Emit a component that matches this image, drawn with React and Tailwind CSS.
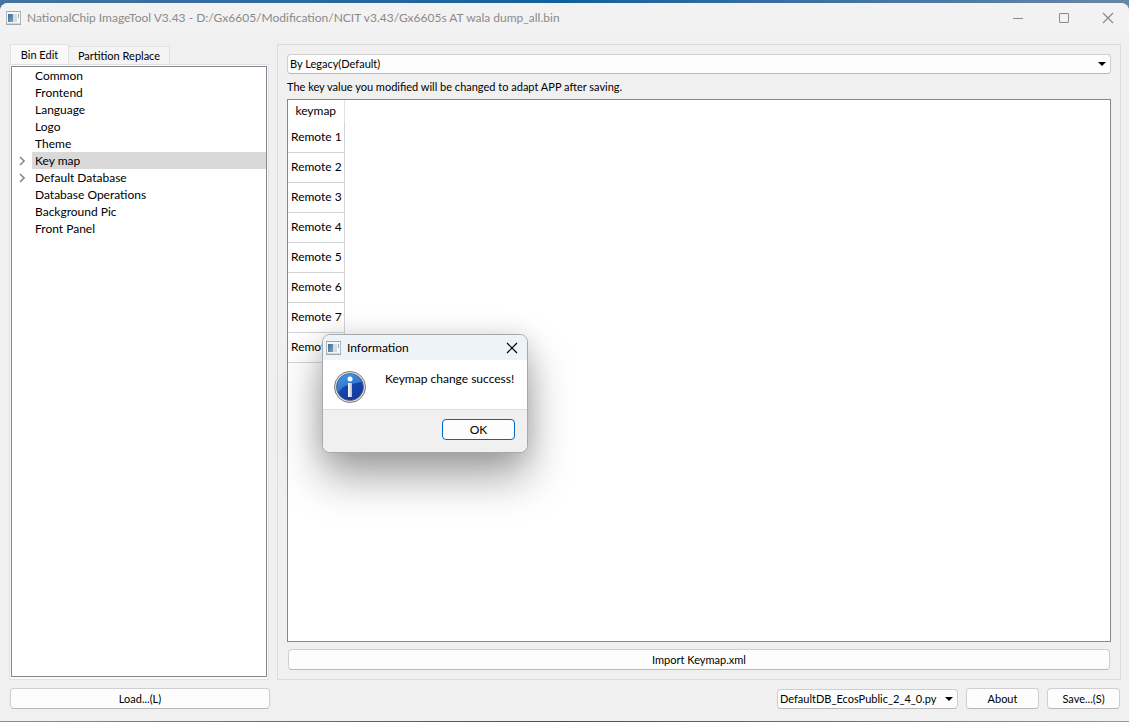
import React, { useState } from 'react';

const treeItems = [
  { name: 'Common' },
  { name: 'Frontend' },
  { name: 'Language' },
  { name: 'Logo' },
  { name: 'Theme' },
  { name: 'Key map', expandable: true },
  { name: 'Default Database', expandable: true },
  { name: 'Database Operations' },
  { name: 'Background Pic' },
  { name: 'Front Panel' },
];

const remotes = ['Remote 1', 'Remote 2', 'Remote 3', 'Remote 4', 'Remote 5', 'Remote 6', 'Remote 7', 'Remote 8'];

const AppIcon = () => (
  <svg width="15" height="14" viewBox="0 0 15 14" className="shrink-0" aria-hidden="true">
    <defs>
      <linearGradient id="appPane" x1="0" y1="0" x2="1" y2="1">
        <stop offset="0" stopColor="#3c6d94" />
        <stop offset="1" stopColor="#7f9fb8" />
      </linearGradient>
    </defs>
    <rect x="0.5" y="0.5" width="14" height="13" fill="#f4f6f7" stroke="#b3b7ba" />
    <path d="M0 0.5h15M0 13.5h15" stroke="#a3a8ab" />
    <rect x="2" y="3" width="5" height="8" fill="url(#appPane)" />
    <rect x="7" y="3" width="4" height="8" fill="#d3dde3" />
    <path d="M12 3h1v4h-1z" fill="#8faabf" />
    <path d="M1 12.5h13" stroke="#d3d6d8" />
  </svg>
);

const InfoIcon = () => (
  <svg width="32" height="32" viewBox="0 0 32 32" className="shrink-0" aria-hidden="true">
    <defs>
      <linearGradient id="infoBall" x1="0" y1="0" x2="0.6" y2="1">
        <stop offset="0" stopColor="#1c55b8" />
        <stop offset="1" stopColor="#1238a0" />
      </linearGradient>
      <linearGradient id="infoShine" x1="0" y1="0" x2="0.6" y2="1">
        <stop offset="0" stopColor="#4a98e6" />
        <stop offset="1" stopColor="#2a6cc6" />
      </linearGradient>
      <linearGradient id="infoStem" x1="0" y1="0" x2="1" y2="0">
        <stop offset="0" stopColor="#ffffff" />
        <stop offset="1" stopColor="#b9bec8" />
      </linearGradient>
    </defs>
    <circle cx="16" cy="16" r="15.5" fill="#e4e4e4" stroke="#777b80" />
    <circle cx="16" cy="16" r="13.5" fill="url(#infoBall)" stroke="#54647c" strokeWidth="0.8" />
    <path d="M3 17A13 13 0 0 1 28 11Q23 12 17 13Q8 15 5 21Q3 20 3 17z" fill="url(#infoShine)" />
    <circle cx="16" cy="8" r="2.5" fill="#fff" />
    <rect x="14" y="12" width="4" height="14" fill="url(#infoStem)" />
  </svg>
);

const CloseIcon = ({ className }) => (
  <svg width="12" height="12" viewBox="0 0 12 12" fill="none" stroke="currentColor" strokeWidth="1.2" className={className} aria-hidden="true">
    <path d="M1 1l10 10M11 1L1 11" />
  </svg>
);

const Combo = ({ label, options, className }) => (
  <div className={`relative ${className}`}>
    <select
      aria-label={label}
      className="block h-5 w-full appearance-none rounded border border-[#cfcfcf] border-b-[#b8b8b8] bg-[#fdfdfd] pl-0.5 pr-4 leading-4"
    >
      {options.map((o) => (
        <option key={o}>{o}</option>
      ))}
    </select>
    <svg width="8" height="4" viewBox="0 0 8 4" className="pointer-events-none absolute right-[5px] top-2" aria-hidden="true">
      <path d="M0 0h8L4 4z" fill="#000" />
    </svg>
  </div>
);

const PushButton = ({ children, className = '', ...rest }) => (
  <button
    type="button"
    className={`h-[21px] rounded border border-[#cfcfcf] border-b-[#b8b8b8] bg-[#fdfdfd] leading-4 hover:bg-[#e8f2fa] ${className}`}
    {...rest}
  >
    {children}
  </button>
);

const TitleBar = () => (
  <header className="flex h-[30px] shrink-0 items-center bg-[#f2f2f2] pl-1.5 text-xs text-[#8a8a8a]">
    <AppIcon />
    <h1 className="min-w-0 flex-1 truncate pl-1.5">
      NationalChip ImageTool V3.43 - D:/Gx6605/Modification/NCIT v3.43/Gx6605s AT wala dump_all.bin
    </h1>
    <button type="button" aria-label="Minimize" className="flex h-full w-[46px] items-center justify-center">
      <svg width="10" height="10" viewBox="0 0 10 10" aria-hidden="true">
        <path d="M0 5.5h10" stroke="currentColor" />
      </svg>
    </button>
    <button type="button" aria-label="Maximize" className="flex h-full w-[46px] items-center justify-center">
      <svg width="10" height="10" viewBox="0 0 10 10" fill="none" aria-hidden="true">
        <rect x="0.5" y="0.5" width="9" height="9" rx="0.5" stroke="currentColor" />
      </svg>
    </button>
    <button type="button" aria-label="Close window" className="flex h-full w-[42px] items-center justify-center">
      <CloseIcon />
    </button>
  </header>
);

const Sidebar = () => {
  const [selected, setSelected] = useState('Key map');

  return (
    <aside className="flex w-[260px] shrink-0 flex-col">
      <div className="flex h-5 items-end pl-px leading-4">
        <button type="button" className="h-5 w-[59px] border border-b-0 border-[#e2e2e2] bg-[#f9f9f9]">Bin Edit</button>
        <button type="button" className="h-[18px] w-[101px] border border-b-0 border-l-0 border-[#e2e2e2] bg-[#f3f3f3]">
          Partition Replace
        </button>
      </div>
      <div className="flex min-h-0 flex-1 border border-[#e2e2e2] bg-[#f9f9f9] p-px pb-0.5">
        <ul className="flex-1 overflow-hidden border border-[#828790] bg-white text-xs">
          {treeItems.map((item) => (
            <li key={item.name} className="flex h-[17px]">
              <span className="flex w-5 items-center justify-center">
                {item.expandable && (
                  <svg width="6" height="10" viewBox="0 0 6 10" fill="none" stroke="#8a8a8a" strokeWidth="1.6" aria-hidden="true">
                    <path d="M1 1L5 5L1 9" />
                  </svg>
                )}
              </span>
              <button
                type="button"
                onClick={() => setSelected(item.name)}
                className={`flex-1 pl-[3px] text-left leading-4 ${selected === item.name ? 'bg-[#d9d9d9]' : ''}`}
              >
                {item.name}
              </button>
            </li>
          ))}
        </ul>
      </div>
    </aside>
  );
};

const KeymapPanel = () => (
  <section className="flex min-w-0 flex-1 flex-col border border-[#dcdcdc] px-[9px] py-[9px]">
    <Combo label="Keymap type" options={['By Legacy(Default)']} className="w-full" />
    <p className="pb-1 pt-[5px] leading-4">The key value you modified will be changed to adapt APP after saving.</p>
    <div className="min-h-0 flex-1 overflow-hidden border border-[#828790] bg-white">
      <table className="border-collapse text-xs">
        <thead>
          <tr>
            <th className="h-[22px] w-[56px] border-r border-[#e2e2e2] p-0 font-normal">keymap</th>
          </tr>
        </thead>
        <tbody>
          {remotes.map((name) => (
            <tr key={name}>
              <td className="h-[30px] whitespace-nowrap border-b border-r border-[#d4d4d4] py-0 pl-[3px] pr-0">{name}</td>
            </tr>
          ))}
        </tbody>
      </table>
    </div>
    <PushButton className="mx-px mt-[7px]">Import Keymap.xml</PushButton>
  </section>
);

const InfoDialog = ({ onClose }) => (
  <div
    role="dialog"
    aria-label="Information"
    className="absolute left-[322px] top-[334px] w-[206px] overflow-hidden rounded-lg border border-[#a6a8aa] bg-white text-xs shadow-[0_24px_44px_rgba(0,0,0,0.36),0_2px_24px_rgba(0,0,0,0.12)]"
  >
    <div className="flex h-[25px] items-center bg-[#eef3f8] pl-[3px]">
      <AppIcon />
      <h2 className="flex-1 pl-1.5">Information</h2>
      <button type="button" aria-label="Close" onClick={onClose} className="flex h-full w-[30px] items-center justify-center">
        <CloseIcon />
      </button>
    </div>
    <div className="flex h-[49px] pl-[11px] pt-[11px]">
      <InfoIcon />
      <p className="pl-[19px] leading-4">Keymap change success!</p>
    </div>
    <div className="flex h-[43px] justify-end border-t border-[#dfdfdf] bg-[#f0f0f0] pr-3 pt-[9px]">
      <button
        type="button"
        onClick={onClose}
        className="h-[21px] w-[73px] rounded border border-[#0067c0] bg-[#fdfdfd] leading-4"
      >
        OK
      </button>
    </div>
  </div>
);

const App = () => {
  const [showInfo, setShowInfo] = useState(true);

  return (
    <div className="relative flex h-screen flex-col bg-gradient-to-r from-[#44749f] via-[#10609c] to-[#6786a5] pt-[3px] font-['Lato','Open_Sans',sans-serif] text-[11px] text-black">
      <div className="flex min-h-0 flex-1 flex-col overflow-hidden rounded-t-lg bg-[#f0f0f0]">
        <TitleBar />
        <main className="flex min-h-0 flex-1 gap-2 pl-[9px] pr-2 pt-[11px]">
          <Sidebar />
          <KeymapPanel />
        </main>
        <footer className="flex shrink-0 items-center gap-2 pb-3 pl-[10px] pr-[9px] pt-2">
          <PushButton className="w-[260px]">Load...(L)</PushButton>
          <Combo label="Database script" options={['DefaultDB_EcosPublic_2_4_0.py']} className="ml-auto w-[181px]" />
          <PushButton className="w-[73px]">About</PushButton>
          <PushButton className="w-[73px]">Save...(S)</PushButton>
        </footer>
      </div>
      <div className="h-px shrink-0 bg-gradient-to-r from-[#8b9092] via-[#454f5b] to-[#9a9a9a]" />
      {showInfo && <InfoDialog onClose={() => setShowInfo(false)} />}
    </div>
  );
};

export default App;
